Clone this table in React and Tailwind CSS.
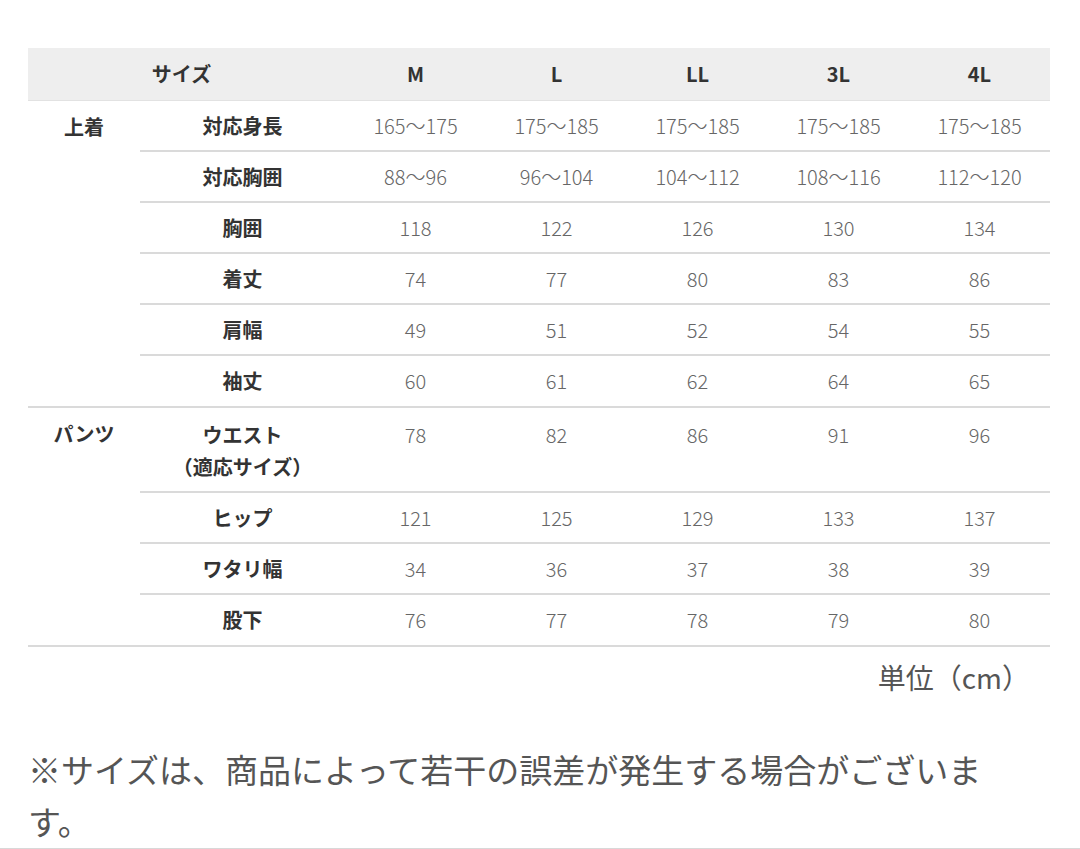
import React from "react";

const sizes = ["M", "L", "LL", "3L", "4L"];

const jacket = [
  ["対応身長", ["165〜175", "175〜185", "175〜185", "175〜185", "175〜185"]],
  ["対応胸囲", ["88〜96", "96〜104", "104〜112", "108〜116", "112〜120"]],
  ["胸囲", ["118", "122", "126", "130", "134"]],
  ["着丈", ["74", "77", "80", "83", "86"]],
  ["肩幅", ["49", "51", "52", "54", "55"]],
  ["袖丈", ["60", "61", "62", "64", "65"]],
];

const pants = [
  [["ウエスト", "（適応サイズ）"], ["78", "82", "86", "91", "96"]],
  [["ヒップ"], ["121", "125", "129", "133", "137"]],
  [["ワタリ幅"], ["34", "36", "37", "38", "39"]],
  [["股下"], ["76", "77", "78", "79", "80"]],
];

function Row({ label, values, last, tall }) {
  const lines = Array.isArray(label) ? label : [label];
  let cls = "flex ";
  if (tall) cls += "h-[85px] items-start pt-[11px] border-b-2 border-[#dadada]";
  else if (last) cls += "h-[50px] items-center";
  else cls += "h-[51px] items-center pt-[1px] border-b-2 border-[#dadada]";
  return (
    <div className={cls}>
      <div className="w-[205px] flex flex-col items-center font-bold text-[20px] leading-[32px] text-[#333]">
        {lines.map((l) => (
          <span key={l} className="whitespace-nowrap">{l}</span>
        ))}
      </div>
      {values.map((v, i) => (
        <div
          key={i}
          className="w-[141px] text-center text-[20px] leading-[32px] text-[#666] font-light whitespace-nowrap"
        >
          {v}
        </div>
      ))}
    </div>
  );
}

function Section({ name, rows, tallFirst }) {
  return (
    <div className="flex border-b-2 border-[#dadada]">
      <div className="w-[112px] pt-[10px] text-center font-bold text-[20px] leading-[32px] text-[#333]">
        {name}
      </div>
      <div className="flex flex-col">
        {rows.map(([label, values], i) => (
          <Row
            key={i}
            label={label}
            values={values}
            last={i === rows.length - 1}
            tall={tallFirst && i === 0}
          />
        ))}
      </div>
    </div>
  );
}

export default function App() {
  return (
    <div
      className="w-[1080px] h-[849px] bg-white border-b border-[#d8d8d8] pt-[48px] pl-[28px] overflow-hidden"
      style={{ fontFamily: '"Noto Sans CJK JP", "Noto Sans", sans-serif' }}
    >
      <div className="w-[1022px]">
        <div className="flex h-[53px] items-center bg-[#eeeeee] border-b border-[#e2e2e2]">
          <div className="w-[317px] text-center font-bold text-[20px] text-[#333] pr-[10px]">サイズ</div>
          {sizes.map((s) => (
            <div key={s} className="w-[141px] text-center font-bold text-[20px] text-[#333]">
              {s}
            </div>
          ))}
        </div>
        <Section name="上着" rows={jacket} />
        <Section name="パンツ" rows={pants} tallFirst />
        <div className="flex justify-end pt-[10px] pr-[20px] text-[28px] leading-[40px] text-[#555]">
          単位（cm）
        </div>
      </div>
      <p className="mt-[46px] w-[980px] text-[33px] leading-[52px] text-[#555]">
        ※サイズは、商品によって若干の誤差が発生する場合がございます。
      </p>
    </div>
  );
}
